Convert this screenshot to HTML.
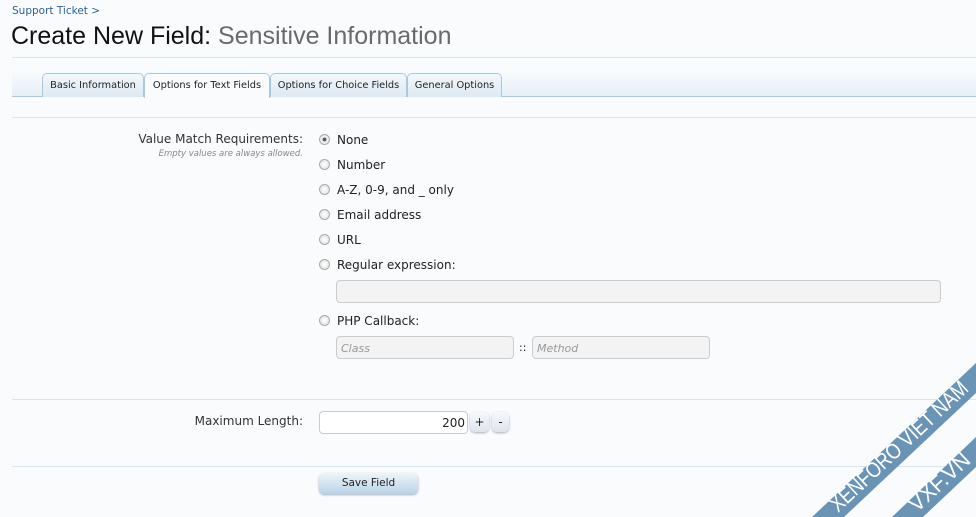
<!DOCTYPE html>
<html><head><style>
body{margin:0;width:976px;height:517px;background:#fafbfd;font-family:"DejaVu Sans","Liberation Sans",sans-serif;position:relative;overflow:hidden;color:#222}
.a{position:absolute}
.bc{left:12px;top:5px;font-size:10.5px;color:#2f5f8c}
h1{position:absolute;left:11px;top:22px;margin:0;font-weight:normal;font-size:25px;color:#111;font-family:"Liberation Sans",sans-serif}
h1 span{color:#6a6a6a}
.hr{position:absolute;left:12px;right:0;height:1px;background:#d7e5f1}
.tabbar{position:absolute;left:12px;right:0;top:70px;height:26px;background:linear-gradient(#fafbfd,#e6eff7);border-bottom:1px solid #a9c8e0}
.tab{position:absolute;top:73px;height:23px;border:1px solid #a9c8e0;border-bottom:none;border-radius:5px 5px 0 0;background:linear-gradient(#f4f8fb,#dde9f3);font-size:9.8px;line-height:23px;text-align:center;color:#222;white-space:nowrap}
.tab.on{background:#fafbfd;height:24px}
.lbl{font-size:12px;color:#333;text-align:right}
.r{position:absolute;left:319px;width:11px;height:11px;border-radius:50%;border:1px solid #aaa;background:radial-gradient(#fff,#ddd);box-sizing:border-box}
.rt{position:absolute;left:337px;font-size:12px;color:#222}
.in{position:absolute;border:1px solid #ccc;border-radius:4px;background:#f3f3f3;box-sizing:border-box;font-size:11px;font-style:italic;color:#999;padding:5px 4px}
.btn{position:absolute;border-radius:5px;background:linear-gradient(#f8f9fc,#dde3ee);box-shadow:0 1px 2px #aab;font-size:12px;text-align:center}
</style></head><body>
<div class="a bc">Support Ticket &gt;</div>
<h1>Create New Field: <span>Sensitive Information</span></h1>
<div class="hr" style="top:57px"></div>
<div class="tabbar"></div>
<div class="tab" style="left:42px;width:100px">Basic Information</div>
<div class="tab on" style="left:144px;width:124px">Options for Text Fields</div>
<div class="tab" style="left:270px;width:135px">Options for Choice Fields</div>
<div class="tab" style="left:407px;width:93px">General Options</div>
<div class="hr" style="top:117px"></div>
<div class="a lbl" style="right:673px;top:132px">Value Match Requirements:</div>
<div class="a" style="right:673px;top:149px;font-size:8.5px;font-style:italic;color:#888">Empty values are always allowed.</div>
<div class="r" style="top:134px;background:radial-gradient(#555 25%,#eee 35%)"></div><div class="rt" style="top:133px">None</div>
<div class="r" style="top:159px"></div><div class="rt" style="top:158px">Number</div>
<div class="r" style="top:184px"></div><div class="rt" style="top:183px">A-Z, 0-9, and _ only</div>
<div class="r" style="top:209px"></div><div class="rt" style="top:208px">Email address</div>
<div class="r" style="top:234px"></div><div class="rt" style="top:233px">URL</div>
<div class="r" style="top:259px"></div><div class="rt" style="top:258px">Regular expression:</div>
<div class="in" style="left:336px;top:280px;width:605px;height:23px"></div>
<div class="r" style="top:315px"></div><div class="rt" style="top:314px">PHP Callback:</div>
<div class="in" style="left:336px;top:336px;width:178px;height:23px">Class</div>
<div class="a" style="left:519px;top:341px;font-size:11px">::</div>
<div class="in" style="left:532px;top:336px;width:178px;height:23px">Method</div>
<div class="hr" style="top:399px"></div>
<div class="a lbl" style="right:673px;top:414px">Maximum Length:</div>
<div class="in" style="left:319px;top:411px;width:149px;height:23px;background:#fff;font-style:normal;color:#222;text-align:right;font-size:12px;padding:4px 2px">200</div>
<div class="btn" style="left:470px;top:412px;width:19px;height:20px;line-height:20px">+</div>
<div class="btn" style="left:492px;top:412px;width:17px;height:20px;line-height:20px">-</div>
<div class="hr" style="top:466px"></div>
<div class="btn" style="left:319px;top:473px;width:99px;height:21px;line-height:21px;font-size:10.5px;background:linear-gradient(#eef4fa,#b9d3e8)">Save Field</div>
<svg class="a" style="left:0;top:0" width="976" height="517">
<polygon points="812,517 976,363 976,393 844,517" fill="#6b94b4"/>
<polygon points="892,517 976,437 976,467 923,517" fill="#6b94b4"/>
<text x="0" y="0" transform="translate(838,513) rotate(-43)" fill="#fff" font-family="Liberation Sans Narrow,Liberation Sans,sans-serif" font-size="22" textLength="180" lengthAdjust="spacingAndGlyphs">XENFORO VIET NAM</text>
<text x="0" y="0" transform="translate(917,513) rotate(-43)" fill="#fff" font-family="Liberation Sans,sans-serif" font-size="22" textLength="75" lengthAdjust="spacingAndGlyphs">VXF.VN</text>
</svg>
</body></html>
